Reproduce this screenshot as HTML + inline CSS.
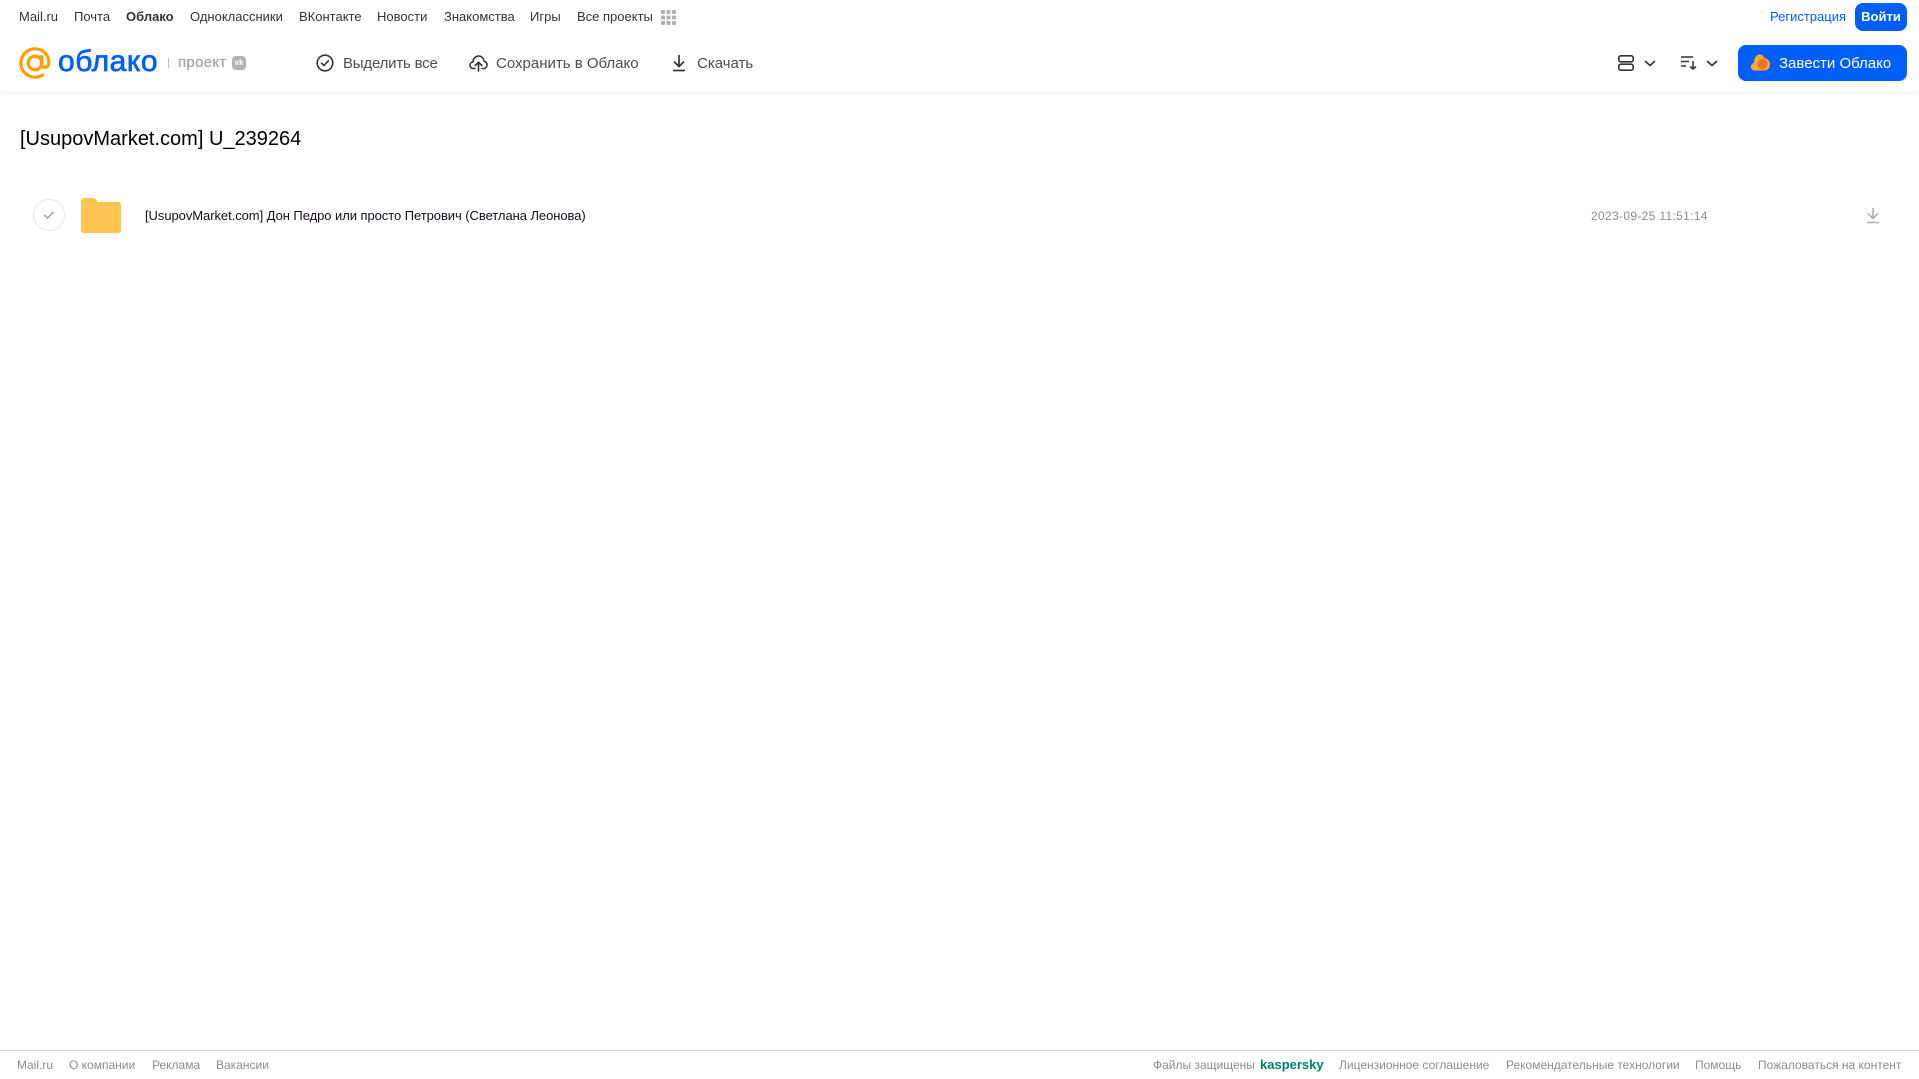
<!DOCTYPE html>
<html lang="ru"><head><meta charset="utf-8"><title>Облако</title>
<style>
html,body{margin:0;padding:0;background:#fff;width:1919px;height:1079px;overflow:hidden}
body{font-family:"Liberation Sans",Arial,sans-serif;position:relative}
.t{position:absolute;white-space:nowrap;line-height:20px}
.n{top:7px;font-size:13px;color:#333}
.b{top:54px;font-size:15px;color:#4d4d4d;letter-spacing:-.1px}
.f{top:1055px;font-size:12px;color:#8c8c8c}
svg{position:absolute;overflow:visible}
</style></head><body>
<div style="position:absolute;left:0;top:0;width:1919px;height:91px;background:#fff;box-shadow:0 1px 8px rgba(0,0,0,.07)"></div>

<span class="t n" style="left:19px">Mail.ru</span>
<span class="t n" style="left:74px">Почта</span>
<span class="t n" style="left:126px;font-weight:bold">Облако</span>
<span class="t n" style="left:190px">Одноклассники</span>
<span class="t n" style="left:299px">ВКонтакте</span>
<span class="t n" style="left:377px">Новости</span>
<span class="t n" style="left:444px">Знакомства</span>
<span class="t n" style="left:530px">Игры</span>
<span class="t n" style="left:577px">Все проекты</span>
<svg style="left:661px;top:10px" width="15" height="15" fill="#b0b0b0"><rect width="4" height="4" rx="1"/><rect x="5.5" width="4" height="4" rx="1"/><rect x="11" width="4" height="4" rx="1"/><rect y="5.5" width="4" height="4" rx="1"/><rect x="5.5" y="5.5" width="4" height="4" rx="1"/><rect x="11" y="5.5" width="4" height="4" rx="1"/><rect y="11" width="4" height="4" rx="1"/><rect x="5.5" y="11" width="4" height="4" rx="1"/><rect x="11" y="11" width="4" height="4" rx="1"/></svg>

<span class="t n" style="left:1770px;color:#005ff9">Регистрация</span>
<div style="position:absolute;left:1855px;top:3px;width:52px;height:28px;background:#005ff9;border-radius:8px;color:#fff;font-size:13px;font-weight:bold;line-height:28px;text-align:center">Войти</div>

<svg style="left:19px;top:47px" width="32" height="32" viewBox="0 0 32 32" fill="none" stroke="#ff9e00" stroke-width="3.2"><circle cx="16" cy="16" r="6.8"/><path d="M22.8 9.5V17.5C22.8 21.8 29.8 21.5 29.8 15.5C29.8 7.5 23.5 1.8 16 1.8C8 1.8 1.8 8.5 1.8 16C1.8 24 8.5 30.2 16 30.2C19 30.2 21.5 29.4 23.5 28" stroke-linecap="round"/></svg>
<span class="t" style="left:58px;top:44px;font-size:30px;line-height:36px;color:#005ff9;-webkit-text-stroke:.7px #005ff9;letter-spacing:.55px">облако</span>
<div style="position:absolute;left:168px;top:58px;width:1px;height:10px;background:#bbb"></div>
<span class="t" style="left:178px;top:53px;font-size:15px;color:#a8a8a8;-webkit-text-stroke:.35px #a8a8a8;letter-spacing:.3px">проект</span>
<div style="position:absolute;left:232px;top:56px;width:14px;height:14px;border-radius:4px;background:#b3b3b3;color:#fff;font-size:8px;font-weight:bold;line-height:14px;text-align:center">vk</div>

<svg style="left:316px;top:54px" width="18" height="18" viewBox="0 0 18 18" fill="none" stroke="#333" stroke-width="1.6"><circle cx="9" cy="9" r="7.8"/><path d="M5.6 9.2L8 11.5L12.4 6.8" stroke-linecap="round" stroke-linejoin="round"/></svg>
<span class="t b" style="left:343px;letter-spacing:-.2px">Выделить все</span>
<svg style="left:469px;top:54px" width="19" height="18" viewBox="0 0 19 18" fill="none" stroke="#333" stroke-width="1.6" stroke-linecap="round" stroke-linejoin="round"><path d="M6 14.5H4.6C2.5 14.5 1 13 1 11.2C1 9.4 2.3 8.2 3.9 8C4.2 4.6 6.6 2 9.6 2C12.5 2 14.6 4.1 15.1 7.2C16.9 7.6 18 9 18 10.9C18 13 16.5 14.5 14.5 14.5H13"/><path d="M9.5 17V8.5M6.2 11.5L9.5 8.2L12.8 11.5"/></svg>
<span class="t b" style="left:496px;letter-spacing:0">Сохранить в Облако</span>
<svg style="left:672px;top:54px" width="14" height="18" viewBox="0 0 14 18" fill="none" stroke="#333" stroke-width="1.7"><path d="M7 1V12.5M2 7.5L7 12.5L12 7.5"/><path d="M1 16.5H13"/></svg>
<span class="t b" style="left:697px;letter-spacing:0">Скачать</span>

<svg style="left:1618px;top:55px" width="16" height="16" viewBox="0 0 16 16" fill="none" stroke="#333" stroke-width="1.6"><rect x=".8" y=".8" width="14.4" height="6" rx="2"/><rect x=".8" y="9.2" width="14.4" height="6" rx="2"/></svg>
<svg style="left:1644px;top:60px" width="12" height="7" viewBox="0 0 12 7" fill="none" stroke="#333" stroke-width="1.7"><path d="M1 1L6 5.5L11 1"/></svg>
<svg style="left:1681px;top:56px" width="16" height="14" viewBox="0 0 16 14" fill="none" stroke="#333" stroke-width="1.4"><path d="M0 1H12M0 5.5H8M0 10H5"/><path d="M12 5V13M9 10.5L12 13L15 10.5" stroke-width="1.5"/></svg>
<svg style="left:1706px;top:60px" width="12" height="7" viewBox="0 0 12 7" fill="none" stroke="#333" stroke-width="1.7"><path d="M1 1L6 5.5L11 1"/></svg>

<div style="position:absolute;left:1738px;top:45px;width:169px;height:36px;background:#005ff9;border-radius:8px"></div>
<svg style="left:1751px;top:54px" width="19" height="17" viewBox="0 0 19 17"><path d="M4 16.5C1.5 16.5 0 14.8 0 12.6C0 10.6 1.2 9.2 3 8.8C3 4 5.4.5 8.7.5C11 .5 12.6 2 13.4 4.2C16.6 4.4 19 6.8 19 10.3C19 14 16.7 16.5 13.5 16.5Z" fill="#ffa930"/><circle cx="11.5" cy="10" r="5.2" fill="#f2701f"/></svg>
<span class="t" style="left:1779px;top:54px;font-size:15px;color:#fff">Завести Облако</span>

<span class="t" style="left:20px;top:126px;font-size:20px;line-height:26px;color:#000">[UsupovMarket.com] U_239264</span>

<div style="position:absolute;left:33px;top:199px;width:30px;height:30px;border:1px solid #e6e6e6;border-radius:50%"></div>
<svg style="left:43px;top:210px" width="12" height="10" viewBox="0 0 12 10" fill="none" stroke="#999" stroke-width="1.4"><path d="M1.5 5L4.6 8L10.5 1.8"/></svg>
<svg style="left:81px;top:198px" width="40" height="35" viewBox="0 0 40 35"><path d="M0 3C0 1.3 1.3 0 3 0H11.5C13 0 14 .6 15 1.8L17 4H37C38.7 4 40 5.3 40 7V32C40 33.7 38.7 35 37 35H3C1.3 35 0 33.7 0 32Z" fill="#ffc34f"/><path d="M0 9H40" stroke="#ffcf72" stroke-width="1"/></svg>
<span class="t" style="left:145px;top:206px;font-size:13px;color:#1a0a1e;letter-spacing:-.06px">[UsupovMarket.com] Дон Педро или просто Петрович (Светлана Леонова)</span>
<span class="t" style="left:1591px;top:206px;font-size:12px;color:#8c8c8c;letter-spacing:.33px">2023-09-25 11:51:14</span>
<svg style="left:1866px;top:207px" width="14" height="17" viewBox="0 0 14 17" fill="none" stroke="#aaa" stroke-width="1.5"><path d="M7 1V11M2 6.5L7 11.5L12 6.5"/><path d="M1 15.5H13"/></svg>

<div style="position:absolute;left:0;top:1050px;width:1919px;height:1px;background:#d9d9d9"></div>
<span class="t f" style="left:17px">Mail.ru</span>
<span class="t f" style="left:69px">О компании</span>
<span class="t f" style="left:152px">Реклама</span>
<span class="t f" style="left:216px">Вакансии</span>
<span class="t f" style="left:1153px">Файлы защищены</span>
<span class="t f" style="left:1260px;font-size:13px;font-weight:bold;color:#00806a">kaspersky</span>
<span class="t f" style="left:1339px">Лицензионное соглашение</span>
<span class="t f" style="left:1506px">Рекомендательные технологии</span>
<span class="t f" style="left:1695px">Помощь</span>
<span class="t f" style="left:1758px">Пожаловаться на контент</span>
</body></html>
